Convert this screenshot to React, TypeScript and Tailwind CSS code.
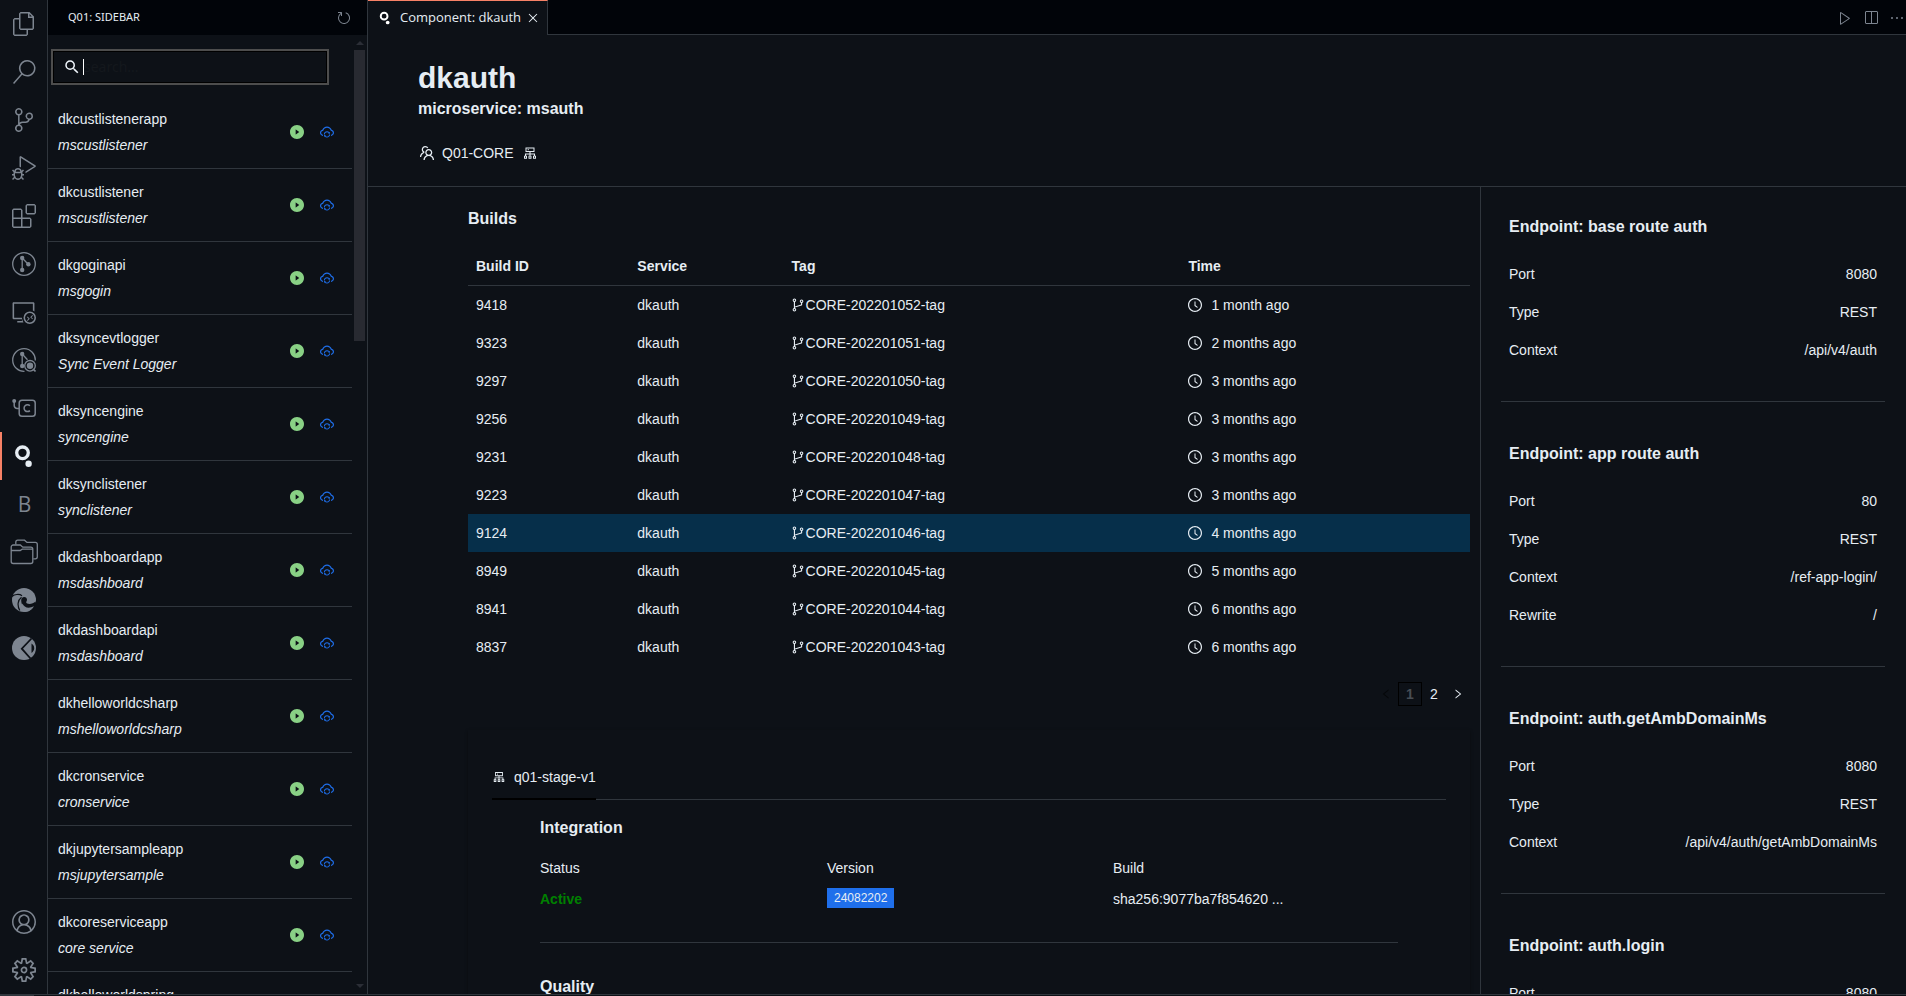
import React from 'react';
import {
  VscAccount,
  VscClose,
  VscDebugAlt,
  VscEllipsis,
  VscExtensions,
  VscFiles,
  VscPlay,
  VscRefresh,
  VscRemoteExplorer,
  VscSearch,
  VscSettingsGear,
  VscSourceControl,
  VscSplitHorizontal,
} from 'react-icons/vsc';
import {
  AiFillPlayCircle,
  AiOutlineBranches,
  AiOutlineClockCircle,
  AiOutlineCloudSync,
  AiOutlineCluster,
  AiOutlineLeft,
  AiOutlineRight,
  AiOutlineTeam,
} from 'react-icons/ai';
import { MdSearch } from 'react-icons/md';

type IconProps = { className?: string };

function QLogo({ className }: IconProps) {
  return (
    <svg viewBox="0 0 24 24" className={className} aria-hidden="true">
      <circle cx="10.5" cy="8.8" r="5.8" fill="none" stroke="currentColor" strokeWidth="3.3" />
      <circle cx="16.6" cy="19.7" r="3.2" fill="currentColor" />
    </svg>
  );
}

function GitLensIcon({ className }: IconProps) {
  return (
    <svg viewBox="0 0 24 24" className={className} fill="none" stroke="currentColor" aria-hidden="true">
      <circle cx="12" cy="12" r="11.3" strokeWidth="1.3" />
      <path d="M10.2 6v12M10.2 6l6 6.2" strokeWidth="1.3" />
      <g fill="currentColor" stroke="none">
        <circle cx="10.2" cy="6" r="2.2" />
        <circle cx="10.2" cy="18" r="2.2" />
        <circle cx="16.4" cy="12.2" r="2.2" />
      </g>
    </svg>
  );
}

function GitLensInspectIcon({ className }: IconProps) {
  return (
    <svg viewBox="0 0 24 24" className={className} fill="none" stroke="currentColor" aria-hidden="true">
      <path d="M12.5 23.3A11.3 11.3 0 1 1 23.3 12.5" strokeWidth="1.3" />
      <path d="M10.2 6v12M10.2 6l5.3 5.8" strokeWidth="1.3" />
      <circle cx="18" cy="17.8" r="5.3" strokeWidth="1.3" />
      <g fill="currentColor" stroke="none">
        <circle cx="10.2" cy="6" r="2.2" />
        <circle cx="10.2" cy="18" r="2.2" />
        <circle cx="18" cy="17.8" r="3.2" />
      </g>
      <path d="M21 21l2.500 2.500" strokeWidth="1.6" />
    </svg>
  );
}

function CommitBoxIcon({ className }: IconProps) {
  return (
    <svg viewBox="0 0 24 24" className={className} fill="none" stroke="currentColor" aria-hidden="true">
      <rect x="7.2" y="4.2" width="16" height="16" rx="2.8" strokeWidth="1.5" />
      <path d="M17.9 9.8a3.4 3.4 0 1 0 0 4.800" strokeWidth="1.5" />
      <path d="M2.2 5v4.500a3 3 0 0 0 3 3h2" strokeWidth="1.5" />
      <circle cx="2.2" cy="5" r="2" fill="currentColor" stroke="none" />
    </svg>
  );
}

function ProjectsIcon({ className }: IconProps) {
  return (
    <svg viewBox="0 0 28 28" className={className} fill="none" stroke="currentColor" strokeWidth="1.3" aria-hidden="true">
      <path d="M1.2 9.500v14a2 2 0 0 0 2 2h17.600a2 2 0 0 0 2-2V11.200a2 2 0 0 0-2-2h-8L10.300 7H3.200a2 2 0 0 0-2 2zM1.200 12.500h9l2-1.300h10.600" />
      <path d="M5.800 6.500V4.200a2 2 0 0 1 2-2h6.700L17 4.400h8.300a2 2 0 0 1 2 2v12.400a2 2 0 0 1-2 2h-2" />
    </svg>
  );
}

function EdgeIcon({ className }: IconProps) {
  return (
    <svg viewBox="0 0 24 24" className={className} aria-hidden="true">
      <circle cx="12" cy="12" r="12" fill="currentColor" />
      <path
        d="M9.200 12.300c0-2 1.200-3.300 3-3.300 1.700 0 2.800 1.200 2.800 2.700 0 1.200-.800 1.700-.800 2.600 0 1 1.400 1.700 3.300 1.700 2 0 4.500-.900 6-2.500l1.500 5.500-3.500 1.300c-2 .900-3.700 1.200-5.300 1-3.800-.400-7-3.800-7-9z"
        fill="#0d1117"
      />
      <path d="M0 8.500C2.500 6.500 7 5.500 10 7.700M7.800 22.500C5.200 18 5.400 12.200 9.500 9.200" fill="none" stroke="#0d1117" strokeWidth="1.2" />
      <path d="M10.500 15.500c1.500 4 6 5.500 11.500 2.800-2.500 4-6.500 5.700-9 5.700-2.800-1.800-4-5-2.500-8.500z" fill="currentColor" />
    </svg>
  );
}

function WedgeIcon({ className }: IconProps) {
  return (
    <svg viewBox="0 0 24 24" className={className} aria-hidden="true">
      <circle cx="12" cy="12" r="12" fill="currentColor" />
      <path d="M19.500 2.500L9.800 12.700 18.500 22.500" fill="none" stroke="#0d1117" strokeWidth="1.8" />
      <path d="M20.200 9c1.800 1.500 1.800 5 0 6.500z" fill="none" stroke="#0d1117" strokeWidth="1.4" />
    </svg>
  );
}

const activityTop = [
  { label: 'Explorer', icon: <VscFiles className="size-6" /> },
  { label: 'Search', icon: <VscSearch className="size-6" /> },
  { label: 'Source Control', icon: <VscSourceControl className="size-6" /> },
  { label: 'Run and Debug', icon: <VscDebugAlt className="size-6" /> },
  { label: 'Extensions', icon: <VscExtensions className="size-6" /> },
  { label: 'GitLens', icon: <GitLensIcon className="size-6" /> },
  { label: 'Remote Explorer', icon: <VscRemoteExplorer className="size-6" /> },
  { label: 'GitLens Inspect', icon: <GitLensInspectIcon className="size-6" /> },
  { label: 'Commits', icon: <CommitBoxIcon className="size-6" /> },
  { label: 'Q01', icon: <QLogo className="size-6" />, active: true },
  { label: 'Bookmarks', icon: <span className="pl-px font-['Open_Sans',sans-serif] text-[21px] leading-6">B</span> },
  { label: 'Project Manager', icon: <ProjectsIcon className="size-7" /> },
  { label: 'Edge Tools', icon: <EdgeIcon className="size-6" /> },
  { label: 'Analysis', icon: <WedgeIcon className="size-6" /> },
];

const activityBottom = [
  { label: 'Accounts', icon: <VscAccount className="size-6" /> },
  { label: 'Manage', icon: <VscSettingsGear className="size-6" /> },
];

const components = [
  ['dkcustlistenerapp', 'mscustlistener'],
  ['dkcustlistener', 'mscustlistener'],
  ['dkgoginapi', 'msgogin'],
  ['dksyncevtlogger', 'Sync Event Logger'],
  ['dksyncengine', 'syncengine'],
  ['dksynclistener', 'synclistener'],
  ['dkdashboardapp', 'msdashboard'],
  ['dkdashboardapi', 'msdashboard'],
  ['dkhelloworldcsharp', 'mshelloworldcsharp'],
  ['dkcronservice', 'cronservice'],
  ['dkjupytersampleapp', 'msjupytersample'],
  ['dkcoreserviceapp', 'core service'],
  ['dkhelloworldspring', 'mshelloworldspring'],
];

const builds = [
  ['9418', 'CORE-202201052-tag', '1 month ago'],
  ['9323', 'CORE-202201051-tag', '2 months ago'],
  ['9297', 'CORE-202201050-tag', '3 months ago'],
  ['9256', 'CORE-202201049-tag', '3 months ago'],
  ['9231', 'CORE-202201048-tag', '3 months ago'],
  ['9223', 'CORE-202201047-tag', '3 months ago'],
  ['9124', 'CORE-202201046-tag', '4 months ago'],
  ['8949', 'CORE-202201045-tag', '5 months ago'],
  ['8941', 'CORE-202201044-tag', '6 months ago'],
  ['8837', 'CORE-202201043-tag', '6 months ago'],
];

const selectedBuild = '9124';

const endpoints: { title: string; rows: [string, string][] }[] = [
  { title: 'base route auth', rows: [['Port', '8080'], ['Type', 'REST'], ['Context', '/api/v4/auth']] },
  { title: 'app route auth', rows: [['Port', '80'], ['Type', 'REST'], ['Context', '/ref-app-login/'], ['Rewrite', '/']] },
  { title: 'auth.getAmbDomainMs', rows: [['Port', '8080'], ['Type', 'REST'], ['Context', '/api/v4/auth/getAmbDomainMs']] },
  { title: 'auth.login', rows: [['Port', '8080']] },
];

function ActivityButton({ label, icon, active }: { label: string; icon: React.ReactNode; active?: boolean }) {
  return (
    <button
      type="button"
      aria-label={label}
      className={
        active
          ? 'flex h-12 w-full items-center justify-center border-l-2 border-[#f78166] pr-px text-[#e6edf3]'
          : 'flex h-12 w-full items-center justify-center pl-px text-[#7d8590]'
      }
    >
      {icon}
    </button>
  );
}

function ActivityBar() {
  return (
    <nav aria-label="Activity bar" className="flex w-12 shrink-0 flex-col justify-between border-r border-[#30363d]">
      <div>
        {activityTop.map((item) => (
          <ActivityButton key={item.label} {...item} />
        ))}
      </div>
      <div>
        {activityBottom.map((item) => (
          <ActivityButton key={item.label} {...item} />
        ))}
      </div>
    </nav>
  );
}

function Sidebar() {
  return (
    <aside className="flex w-80 shrink-0 flex-col border-r border-[#30363d]">
      <header className="flex h-[35px] shrink-0 items-center justify-between bg-[#010409] pr-[15px] pl-5 font-['Noto_Sans',sans-serif] text-[11px] text-[#e6edf3]">
        <h2 className="pb-px">Q01: SIDEBAR</h2>
        <button type="button" aria-label="Refresh" className="text-[#7d8590]">
          <VscRefresh className="size-4" />
        </button>
      </header>
      <div className="flex min-h-0 flex-1">
        <div className="min-w-0 flex-1 overflow-hidden">
          <label className="mt-3.5 mr-[23px] ml-[3px] flex h-9 items-center border-2 border-[#4d4d4d] pl-2.5 shadow-[inset_0_0_0_1px_#000]">
            <MdSearch className="size-[18px] shrink-0 text-[#f0f6fc]" />
            <span className="ml-0.5 h-4 w-px shrink-0 bg-white" />
            <input
              type="text"
              aria-label="Search components"
              placeholder="search..."
              className="min-w-0 flex-1 bg-transparent font-['Noto_Sans',sans-serif] text-sm text-[#e6edf3] outline-none placeholder:text-[#14181d]"
            />
          </label>
          <ul className="mt-[11px]">
            {components.map(([name, service]) => (
              <li key={name} className="flex items-center border-b border-[#30363d] py-2.5 pr-[17px] pl-2.5">
                <div className="flex-1 leading-[26px]">
                  <p>{name}</p>
                  <p className="italic">{service}</p>
                </div>
                <div className="flex gap-3.5">
                  <button type="button" aria-label={`Run ${name}`} className="text-[#89d185]">
                    <AiFillPlayCircle className="size-4" />
                  </button>
                  <button type="button" aria-label={`Sync ${name}`} className="text-[#1f6feb]">
                    <AiOutlineCloudSync className="size-4" />
                  </button>
                </div>
              </li>
            ))}
          </ul>
        </div>
        <div className="mr-0.5 ml-0.5 flex w-[11px] flex-col items-center py-1.5 text-[#2b2e36]">
          <svg viewBox="0 0 8 4" className="h-1 w-2" aria-hidden="true">
            <path d="M0 4L4 0L8 4z" fill="currentColor" />
          </svg>
          <div className="mt-[5px] h-[291px] w-full bg-[#282a31]" />
          <svg viewBox="0 0 8 4" className="mt-auto h-1 w-2" aria-hidden="true">
            <path d="M0 0L4 4L8 0z" fill="currentColor" />
          </svg>
        </div>
      </div>
    </aside>
  );
}

function TabBar() {
  return (
    <div className="flex h-[35px] shrink-0 bg-[#010409]">
      <div className="flex items-center border-t border-r border-t-[#f78166] border-r-[#30363d] bg-[#0d1117] pr-1 pl-2.5 font-['Open_Sans',sans-serif] text-[13px]">
        <QLogo className="size-3.5 text-white" />
        <span className="ml-2 pb-px">Component: dkauth</span>
        <button type="button" aria-label="Close tab" className="ml-0.5 p-0.5">
          <VscClose className="size-4" />
        </button>
      </div>
      <div className="flex flex-1 items-center justify-end gap-2.5 border-b border-[#30363d] pt-px pr-px text-[#7d8590]">
        <button type="button" aria-label="Run">
          <VscPlay className="size-4" />
        </button>
        <button type="button" aria-label="Split editor">
          <VscSplitHorizontal className="size-4" />
        </button>
        <button type="button" aria-label="More actions">
          <VscEllipsis className="size-4" />
        </button>
      </div>
    </div>
  );
}

function ComponentHeader() {
  return (
    <header className="h-[152px] shrink-0 border-b border-[#30363d] px-[50px] pt-[26px]">
      <h1 className="text-[30px] leading-[34px] font-bold">dkauth</h1>
      <p className="text-base leading-7 font-bold">microservice: msauth</p>
      <div className="mt-[19px] flex items-center leading-[22px]">
        <AiOutlineTeam className="size-[18px]" />
        <span className="ml-1.5">Q01-CORE</span>
        <AiOutlineCluster className="ml-2 size-4" />
      </div>
    </header>
  );
}

function BuildsTable() {
  return (
    <table className="mt-4 w-full table-fixed text-left leading-[22px]">
      <colgroup>
        <col className="w-[16.1%]" />
        <col className="w-[15.4%]" />
        <col className="w-[39.6%]" />
        <col />
      </colgroup>
      <thead>
        <tr className="border-b border-[#30363d]">
          <th className="p-2 font-bold">Build ID</th>
          <th className="p-2 font-bold">Service</th>
          <th className="p-2 font-bold">Tag</th>
          <th className="p-2 font-bold">Time</th>
        </tr>
      </thead>
      <tbody>
        {builds.map(([id, tag, time]) => (
          <tr key={id} className={id === selectedBuild ? 'bg-[#062f4a]' : ''}>
            <td className="p-2">{id}</td>
            <td className="p-2">dkauth</td>
            <td className="p-2 pl-1.5">
              <span className="flex items-center">
                <AiOutlineBranches className="size-4" />
                {tag}
              </span>
            </td>
            <td className="p-2 pl-[7px]">
              <span className="flex items-center gap-2">
                <AiOutlineClockCircle className="size-4" />
                {time}
              </span>
            </td>
          </tr>
        ))}
      </tbody>
    </table>
  );
}

function Pagination() {
  return (
    <nav aria-label="Builds pages" className="mt-4 flex justify-end">
      <button type="button" disabled aria-label="Previous page" className="flex size-6 items-center justify-center text-[#050709]">
        <AiOutlineLeft className="size-3" />
      </button>
      <button type="button" aria-current="page" className="size-6 border border-black font-bold text-[#484d54]">
        1
      </button>
      <button type="button" className="size-6">
        2
      </button>
      <button type="button" aria-label="Next page" className="flex size-6 items-center justify-center">
        <AiOutlineRight className="size-3" />
      </button>
    </nav>
  );
}

function StageCard() {
  return (
    <section className="mt-6 px-6 pt-[34px] shadow-[0_1px_3px_rgba(0,0,0,0.35)]">
      <div role="tablist" className="flex border-b border-[#30363d]">
        <button type="button" role="tab" aria-selected="true" className="-mb-px flex items-center gap-2 border-b-2 border-black pt-0.5 pb-2.5 leading-[22px]">
          <AiOutlineCluster className="size-3.5" />
          q01-stage-v1
        </button>
      </div>
      <div className="px-12 pt-4">
        <h3 className="text-base leading-6 font-bold">Integration</h3>
        <div className="mt-[17px] grid grid-cols-3 border-b border-[#30363d] pb-[31px]">
          <dl>
            <dt className="leading-[22px]">Status</dt>
            <dd className="mt-2 leading-6 font-bold text-[#008000]">Active</dd>
          </dl>
          <dl className="pl-px">
            <dt className="leading-[22px]">Version</dt>
            <dd className="mt-[9px]">
              <span className="block w-fit bg-[#1f6feb] px-[7px] text-xs leading-5">24082202</span>
            </dd>
          </dl>
          <dl className="pl-px">
            <dt className="leading-[22px]">Build</dt>
            <dd className="mt-2 leading-6">sha256:9077ba7f854620 ...</dd>
          </dl>
        </div>
        <h3 className="mt-8 text-base leading-6 font-bold">Quality</h3>
      </div>
    </section>
  );
}

function Endpoints() {
  return (
    <aside className="w-[426px] shrink-0 overflow-hidden border-l border-[#30363d] pr-[21px] pl-5">
      {endpoints.map((endpoint) => (
        <section key={endpoint.title} className="border-b border-[#30363d] px-2 pt-10 pb-8 first:pt-7">
          <h3 className="mb-4 text-base leading-6 font-bold">Endpoint: {endpoint.title}</h3>
          <dl className="leading-[38px]">
            {endpoint.rows.map(([label, value]) => (
              <div key={label} className="flex justify-between">
                <dt>{label}</dt>
                <dd>{value}</dd>
              </div>
            ))}
          </dl>
        </section>
      ))}
    </aside>
  );
}

export default function App() {
  return (
    <div className="flex h-screen flex-col overflow-hidden bg-[#0d1117] font-['Liberation_Sans',Arial,sans-serif] text-sm text-[#e6edf3]">
      <div className="flex min-h-0 flex-1">
        <ActivityBar />
        <Sidebar />
        <main className="flex min-w-0 flex-1 flex-col">
          <TabBar />
          <ComponentHeader />
          <div className="flex min-h-0 flex-1">
            <div className="min-w-0 flex-1 overflow-hidden pr-2.5 pl-[100px]">
              <h2 className="pt-5 text-base leading-6 font-bold">Builds</h2>
              <BuildsTable />
              <Pagination />
              <StageCard />
            </div>
            <Endpoints />
          </div>
        </main>
      </div>
      <footer className="flex h-0.5 shrink-0 border-t border-[#30363d]">
        <div className="w-[34px] bg-[#30363d]" />
      </footer>
    </div>
  );
}
